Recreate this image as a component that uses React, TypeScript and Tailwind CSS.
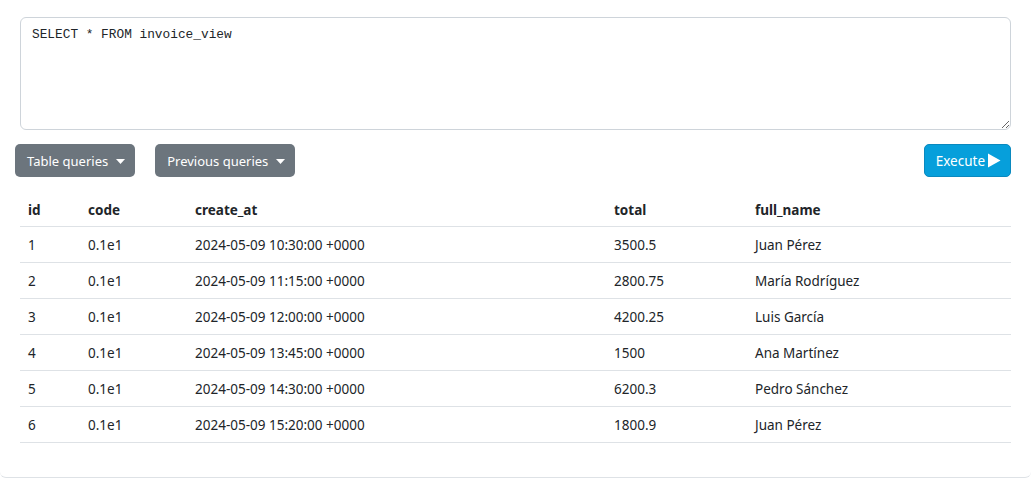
import { ChangeEvent, useState } from "react"

type Row = {
  id: number
  code: string
  create_at: string
  total: string
  full_name: string
}

const rows: Row[] = [
  { id: 1, code: "0.1e1", create_at: "2024-05-09 10:30:00 +0000", total: "3500.5", full_name: "Juan Pérez" },
  { id: 2, code: "0.1e1", create_at: "2024-05-09 11:15:00 +0000", total: "2800.75", full_name: "María Rodríguez" },
  { id: 3, code: "0.1e1", create_at: "2024-05-09 12:00:00 +0000", total: "4200.25", full_name: "Luis García" },
  { id: 4, code: "0.1e1", create_at: "2024-05-09 13:45:00 +0000", total: "1500", full_name: "Ana Martínez" },
  { id: 5, code: "0.1e1", create_at: "2024-05-09 14:30:00 +0000", total: "6200.3", full_name: "Pedro Sánchez" },
  { id: 6, code: "0.1e1", create_at: "2024-05-09 15:20:00 +0000", total: "1800.9", full_name: "Juan Pérez" },
]

function Caret() {
  return (
    <svg width="9" height="5" viewBox="0 0 9 5" className="ml-[8px] -mt-[1px]">
      <path d="M0 0h9L4.5 5z" fill="white" />
    </svg>
  )
}

function DropdownButton({ label }: { label: string }) {
  return (
    <button className="flex h-[33px] items-center rounded-[5px] bg-[#6c757d] pl-3 pr-[10px] pt-[2px] text-[13px] text-white">
      {label}
      <Caret />
    </button>
  )
}

export default function App() {
  const [query, setQuery] = useState("SELECT * FROM invoice_view")

  return (
    <div className="h-[478px] bg-white font-['Noto_Sans',sans-serif] text-[#212529]">
      <div className="h-[478px] rounded-b-[6px] border-b border-[#dee2e6] px-5 pt-[17px]">
        <textarea
          value={query}
          onChange={(e: ChangeEvent<HTMLTextAreaElement>) => setQuery(e.target.value)}
          className="block h-[113px] w-full resize-y rounded-[6px] border border-[#ced4da] px-[11px] py-[7px] font-['Liberation_Mono',monospace] text-[12.8px] leading-[20px] text-[#212529] outline-none"
        />

        <div className="mt-[14px] flex items-center -ml-[5px]">
          <DropdownButton label="Table queries" />
          <div className="w-[20px]" />
          <DropdownButton label="Previous queries" />
          <button className="ml-auto flex h-[33px] items-center rounded-[5px] border border-[#0a89bf] bg-[#069fdb] pl-[11px] pr-[9px] pt-[2px] text-[13.5px] text-white">
            Execute
            <svg width="14" height="15" viewBox="0 0 14 15" className="ml-[2px] -mt-[2px]">
              <path d="M1 0.5L13.5 7.5 1 14.5z" fill="white" />
            </svg>
          </button>
        </div>

        <table className="mt-[13px] w-full border-collapse text-[13.5px]">
          <thead>
            <tr className="h-[36px] border-b border-[#dee2e6] text-left">
              <th className="w-[60px] px-2 pb-[5px] align-bottom font-bold">id</th>
              <th className="w-[107px] px-2 pb-[5px] align-bottom font-bold">code</th>
              <th className="w-[419px] px-2 pb-[5px] align-bottom font-bold">create_at</th>
              <th className="w-[141px] px-2 pb-[5px] align-bottom font-bold">total</th>
              <th className="px-2 pb-[5px] align-bottom font-bold">full_name</th>
            </tr>
          </thead>
          <tbody>
            {rows.map((r) => (
              <tr key={r.id} className="h-[36px] border-b border-[#dee2e6]">
                <td className="px-2 pt-[2px]">{r.id}</td>
                <td className="px-2 pt-[2px]">{r.code}</td>
                <td className="px-2 pt-[2px]">{r.create_at}</td>
                <td className="px-2 pt-[2px]">{r.total}</td>
                <td className="px-2 pt-[2px]">{r.full_name}</td>
              </tr>
            ))}
          </tbody>
        </table>
      </div>
    </div>
  )
}
